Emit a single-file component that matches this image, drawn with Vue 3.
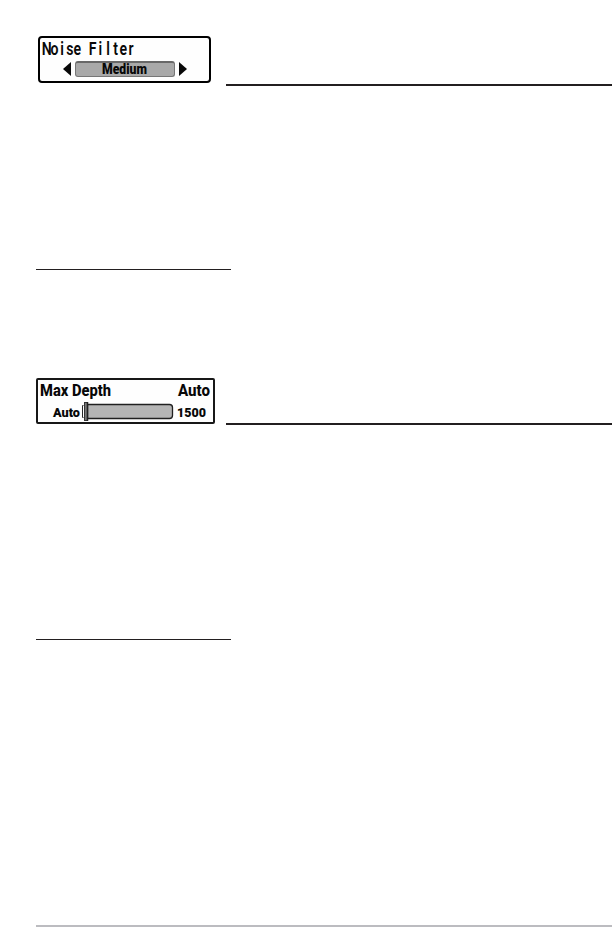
<script setup>
import { ref, computed } from 'vue';

const noiseFilter = ref({ title: 'Noise Filter', value: 'Medium' });
const maxDepth = ref({ title: 'Max Depth', value: 'Auto', min: 'Auto', max: '1500' });

// Celdas de ancho fijo para el título (la letra va condensada al 80%)
const titleChars = computed(() =>
    [...noiseFilter.value.title].map((char, i) => ({ char, x: (4.8 + i * 7.65) / 0.8 }))
);
</script>

<template>
    <main class="page">
        <section class="block filter-block">
            <div class="card filter-card">
                <svg class="filter-title" width="92" height="18">
                    <text y="14" transform="scale(0.8 1)"><tspan v-for="(c, i) in titleChars" :key="i" :x="c.x">{{ c.char }}</tspan></text>
                </svg>
                <div class="selector">
                    <svg width="9" height="16" viewBox="0 0 9 16"><path d="M8 1v14L0 8z" /></svg>
                    <div class="selector-value">
                        <svg width="46" height="14">
                            <text x="0" y="11.3" textLength="45" lengthAdjust="spacingAndGlyphs">{{ noiseFilter.value }}</text>
                        </svg>
                    </div>
                    <svg width="9" height="16" viewBox="0 0 9 16"><path d="M1 1v14L9 8z" /></svg>
                </div>
            </div>
            <hr class="rule" />
        </section>
        <hr class="note-rule" />

        <section class="block depth-block">
            <div class="card depth-card">
                <div class="depth-head">
                    <svg width="72" height="19">
                        <text x="0" y="14.4" textLength="71" lengthAdjust="spacingAndGlyphs">{{ maxDepth.title }}</text>
                    </svg>
                    <svg width="33" height="19">
                        <text x="0" y="14.4" textLength="32" lengthAdjust="spacingAndGlyphs">{{ maxDepth.value }}</text>
                    </svg>
                </div>
                <div class="depth-slider">
                    <svg class="limit" width="29" height="14">
                        <text x="0" y="12.3" textLength="27" lengthAdjust="spacingAndGlyphs">{{ maxDepth.min }}</text>
                    </svg>
                    <!-- Barra con el cursor en el mínimo -->
                    <svg width="92" height="19" viewBox="0 0 92 19">
                        <path class="track" d="M5.5 2.5h82q3 0 3 3v8q0 3-3 3h-82z" />
                        <path class="edge" d="M1.5 3.5h-1v12h1" />
                        <rect class="thumb" x="2.5" y=".5" width="3" height="18" />
                        <path class="thumb-shade" d="M5.5 0v19" />
                    </svg>
                    <svg class="limit max" width="30" height="14">
                        <text x="0" y="12.3" textLength="29" lengthAdjust="spacingAndGlyphs">{{ maxDepth.max }}</text>
                    </svg>
                </div>
            </div>
            <hr class="rule" />
        </section>
        <hr class="note-rule second" />

        <hr class="footer-rule" />
    </main>
</template>

<style>
body {
    margin: 0;
    background: #fff;
}
</style>

<style scoped>
.page {
    display: flex;
    flex-direction: column;
    width: 612px;
    height: 927px;
    padding: 36px 0 0 36px;
    box-sizing: border-box;
    overflow: hidden;
    font-family: 'Roboto', 'Liberation Sans', sans-serif;
}

svg {
    display: block;
    flex: none;
    overflow: visible;
    fill: #080808;
}

hr {
    margin: 0;
    border: 0;
}

.block {
    display: flex;
    justify-content: space-between;
    align-items: flex-end;
}

.card {
    box-sizing: border-box;
    background: #fefefe;
}

.rule {
    width: 386px;
    height: 2px;
    background: #231f20;
}

.note-rule {
    width: 195px;
    height: 1px;
    background: #231f20;
}

/* Filtro de ruido */
.filter-block {
    height: 50px;
    margin-bottom: 183px;
}

.filter-card {
    align-self: flex-start;
    width: 173px;
    height: 47px;
    margin-left: 2px;
    padding: 3px 0 0 2px;
    border: 2px solid #000;
    border-radius: 4px;
}

.filter-title {
    font-size: 17.6px;
    font-weight: 600;
    text-anchor: middle;
}

.selector {
    display: flex;
    align-items: center;
    gap: 3px;
    margin: 2px 0 0 21px;
}

.selector-value {
    display: flex;
    align-items: center;
    justify-content: center;
    width: 100px;
    height: 16px;
    box-sizing: border-box;
    border: 1px solid #777;
    border-top: 2px solid #686868;
    border-radius: 3px;
    background: #a9a9a9;
    font-size: 14px;
    font-weight: 900;
}

/* Profundidad máxima */
.depth-block {
    height: 47px;
    margin-top: 108px;
    margin-bottom: 214px;
}

.depth-card {
    align-self: flex-start;
    width: 179px;
    height: 46px;
    padding: 2px 2px 0;
    border: 2px solid #181818;
    border-radius: 2px;
}

.depth-head {
    display: flex;
    justify-content: space-between;
    font-size: 16px;
    font-weight: 800;
}

.depth-slider {
    display: flex;
    align-items: center;
    margin-top: 1px;
    margin-left: 13px;
    font-size: 12.2px;
    font-weight: 900;
}

.limit.max {
    margin-left: 3px;
}

.track {
    fill: #b5b5b5;
    stroke: #202020;
    stroke-width: 1.3px;
}

.edge {
    fill: none;
    stroke: #282828;
}

.thumb {
    fill: #777;
    stroke: #333;
}

.thumb-shade {
    stroke: #222;
    stroke-width: 1.5px;
}

.footer-rule {
    width: 576px;
    height: 2px;
    margin-top: auto;
    background: #bcbcc0;
}
</style>
